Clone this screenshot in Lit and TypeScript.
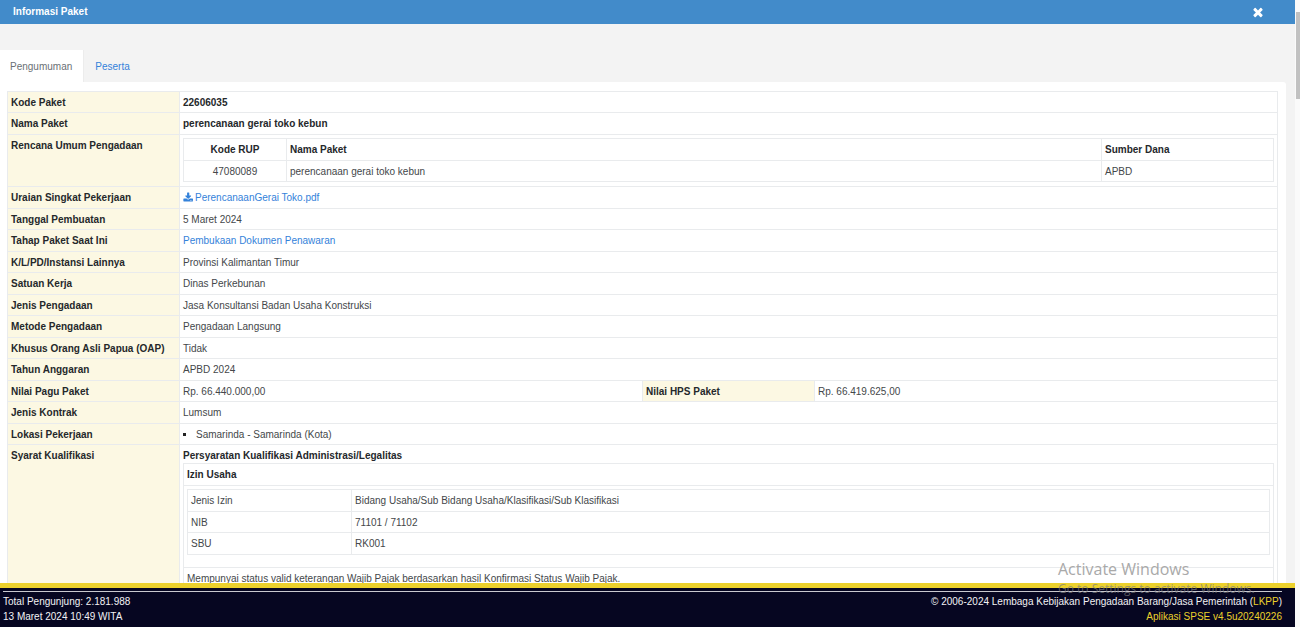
import { LitElement, html, css, nothing } from "lit";
import type { TemplateResult } from "lit";
import { customElement, state } from "lit/decorators.js";

const ICON_DOWNLOAD =
  "M1344 1344q0-26-19-45t-45-19-45 19-19 45 19 45 45 19 45-19 19-45zm256 0q0-26-19-45t-45-19-45 19-19 45 19 45 45 19 45-19 19-45zm128-224v320q0 40-28 68t-68 28h-1472q-40 0-68-28t-28-68v-320q0-40 28-68t68-28h465l135 136q58 56 136 56t136-56l136-136h464q40 0 68 28t28 68zm-325-569q17 41-14 70l-448 448q-18 19-45 19t-45-19l-448-448q-31-29-14-70 17-39 59-39h256v-448q0-26 19-45t45-19h256q26 0 45 19t19 45v448h256q42 0 59 39z";
const ICON_TIMES =
  "M1490 1322q0 40-28 68l-136 136q-28 28-68 28t-68-28l-294-294-294 294q-28 28-68 28t-68-28l-136-136q-28-28-28-68t28-68l294-294-294-294q-28-28-28-68t28-68l136-136q28-28 68-28t68 28l294 294 294-294q28-28 68-28t68 28l136 136q28 28 28 68t-28 68l-294 294 294 294q28 28 28 68z";

interface Row {
  label: string;
  value: string | TemplateResult;
  strong?: boolean;
  nested?: boolean;
  extra?: { label: string; value: string };
}

@customElement("app-root")
export class AppRoot extends LitElement {
  static styles = css`
    :host {
      display: grid;
      grid-template-columns: minmax(0, 1fr) 5px;
      height: 100vh;
      overflow: hidden;
      background: #f3f3f3;
      color: #44474a;
      font: 10px/16px "Liberation Sans", Arial, sans-serif;
    }
    a {
      color: #3482da;
      text-decoration: none;
    }
    .page {
      display: flex;
      flex-direction: column;
      min-height: 0;
      position: relative;
    }
    .titlebar {
      display: flex;
      justify-content: space-between;
      align-items: center;
      flex: none;
      height: 24px;
      padding: 0 30px 0 13px;
      background: #428bca;
      color: #fff;
    }
    .title {
      margin: 0;
      font-size: 10px;
      line-height: 16px;
      font-weight: bold;
    }
    .close {
      display: flex;
      padding: 0;
      border: 0;
      background: none;
      color: inherit;
      cursor: pointer;
    }
    .close svg {
      width: 14px;
      height: 14px;
      fill: currentColor;
    }
    .tabs {
      display: flex;
      flex: none;
      padding-top: 26px;
    }
    .tab {
      height: 32px;
      padding: 1px 11px 0;
      border: 0;
      background: none;
      color: #3482da;
      font: inherit;
      cursor: pointer;
    }
    .tab.active {
      padding-left: 10px;
      border-right: 1px solid #ececec;
      background: #fff;
      color: #6a7075;
    }
    .panel {
      flex: 1;
      min-height: 0;
      overflow: hidden;
      margin-right: 9px;
      padding: 9px 8px 0 7px;
      border-radius: 0 3px 0 0;
      background: #fff;
    }
    table {
      width: 100%;
      border-collapse: collapse;
      table-layout: fixed;
    }
    th,
    td {
      padding: 1px 3px 0;
      border: 1px solid #e9ebed;
      line-height: 19px;
      text-align: left;
      vertical-align: top;
      font-weight: normal;
    }
    .details > tbody > tr:nth-child(even) > *,
    .inner > tbody > tr:nth-child(odd) > * {
      line-height: 20px;
    }
    .label-col {
      width: 172px;
    }
    .label {
      background: #fcf8e3;
      white-space: nowrap;
    }
    .label,
    .strong,
    .head th {
      color: #25282b;
      font-weight: bold;
    }
    td.nested {
      padding-top: 3px;
      padding-bottom: 4px;
    }
    .code-col {
      width: 103px;
    }
    .fund-col {
      width: 172px;
    }
    .license-col {
      width: 164px;
    }
    .rup .code {
      text-align: center;
    }
    .heading {
      margin: 0;
      padding-top: 2px;
      line-height: 15px;
    }
    .group td.holder {
      padding-top: 3px;
      padding-bottom: 12px;
    }
    .file svg {
      width: 10px;
      height: 10px;
      margin-right: 2px;
      vertical-align: -1px;
      fill: currentColor;
    }
    .places {
      margin: 0;
      padding-left: 13px;
      list-style: square;
    }
    .places li::marker {
      color: #222;
    }
    .footer {
      flex: none;
      padding: 3px 13px 0 3px;
      border-top: 5px solid #ecd12c;
      background: #060621;
      color: #f2f2f4;
      line-height: 15px;
    }
    .footer-rows {
      display: flex;
      justify-content: space-between;
      border-top: 1px solid #c9c9cf;
      padding-top: 2px;
      padding-bottom: 3px;
    }
    .footer p {
      margin: 0;
    }
    .right {
      text-align: right;
    }
    .gold {
      color: #ecd12c;
    }
    .notice {
      position: absolute;
      right: 42px;
      bottom: 29px;
      width: 195px;
      color: #a9a9a9;
      font-family: "Open Sans", "Noto Sans", sans-serif;
      font-size: 12px;
      line-height: 18px;
      white-space: nowrap;
      pointer-events: none;
    }
    .notice p {
      margin: 0;
    }
    .notice-title {
      font-size: 16px;
      line-height: 22px;
    }
    .notice-text {
      color: rgba(125, 125, 125, 0.7);
    }
    .track {
      padding: 12px 0 0 1px;
      background: #fafafa;
    }
    .thumb {
      height: 87px;
      background: #c1c1c1;
    }
  `;

  @state() private tab = "Pengumuman";

  private rows: Row[] = [
    { label: "Kode Paket", value: "22606035", strong: true },
    { label: "Nama Paket", value: "perencanaan gerai toko kebun", strong: true },
    { label: "Rencana Umum Pengadaan", value: this.rupTable(), nested: true },
    {
      label: "Uraian Singkat Pekerjaan",
      value: html`<a class="file" href="#"
        ><svg viewBox="0 0 1728 1536" aria-hidden="true"><path d=${ICON_DOWNLOAD} /></svg
        >PerencanaanGerai Toko.pdf</a
      >`,
    },
    { label: "Tanggal Pembuatan", value: "5 Maret 2024" },
    { label: "Tahap Paket Saat Ini", value: html`<a href="#">Pembukaan Dokumen Penawaran</a>` },
    { label: "K/L/PD/Instansi Lainnya", value: "Provinsi Kalimantan Timur" },
    { label: "Satuan Kerja", value: "Dinas Perkebunan" },
    { label: "Jenis Pengadaan", value: "Jasa Konsultansi Badan Usaha Konstruksi" },
    { label: "Metode Pengadaan", value: "Pengadaan Langsung" },
    { label: "Khusus Orang Asli Papua (OAP)", value: "Tidak" },
    { label: "Tahun Anggaran", value: "APBD 2024" },
    {
      label: "Nilai Pagu Paket",
      value: "Rp. 66.440.000,00",
      extra: { label: "Nilai HPS Paket", value: "Rp. 66.419.625,00" },
    },
    { label: "Jenis Kontrak", value: "Lumsum" },
    {
      label: "Lokasi Pekerjaan",
      value: html`<ul class="places"><li>Samarinda - Samarinda (Kota)</li></ul>`,
    },
    { label: "Syarat Kualifikasi", value: this.requirements() },
  ];

  private rupTable() {
    return html`<table class="inner rup">
      <colgroup><col class="code-col" /><col /><col class="fund-col" /></colgroup>
      <tbody>
        <tr class="head"><th class="code" scope="col">Kode RUP</th><th scope="col">Nama Paket</th><th scope="col">Sumber Dana</th></tr>
        <tr><td class="code">47080089</td><td>perencanaan gerai toko kebun</td><td>APBD</td></tr>
      </tbody>
    </table>`;
  }

  private requirements() {
    const licenses = [
      ["Jenis Izin", "Bidang Usaha/Sub Bidang Usaha/Klasifikasi/Sub Klasifikasi"],
      ["NIB", "71101 / 71102"],
      ["SBU", "RK001"],
    ];
    return html`<p class="heading strong">Persyaratan Kualifikasi Administrasi/Legalitas</p>
      <table class="inner group">
        <tbody>
          <tr class="head"><th scope="col">Izin Usaha</th></tr>
          <tr>
            <td class="holder">
              <table class="inner">
                <colgroup><col class="license-col" /><col /></colgroup>
                <tbody>
                  ${licenses.map(([name, text]) => html`<tr><td>${name}</td><td>${text}</td></tr>`)}
                </tbody>
              </table>
            </td>
          </tr>
          <tr><td>Mempunyai status valid keterangan Wajib Pajak berdasarkan hasil Konfirmasi Status Wajib Pajak.</td></tr>
        </tbody>
      </table>`;
  }

  private renderRow(row: Row) {
    return html`<tr>
      <th class="label" scope="row">${row.label}</th>
      <td class="${row.strong ? "strong" : ""} ${row.nested ? "nested" : ""}" colspan=${row.extra ? 1 : 3}>${row.value}</td>
      ${row.extra
        ? html`<th class="label" scope="row">${row.extra.label}</th><td>${row.extra.value}</td>`
        : nothing}
    </tr>`;
  }

  render() {
    return html`
      <div class="page">
        <header class="titlebar">
          <h1 class="title">Informasi Paket</h1>
          <button class="close" aria-label="Tutup">
            <svg viewBox="0 0 1792 1792" aria-hidden="true"><path d=${ICON_TIMES} /></svg>
          </button>
        </header>
        <nav class="tabs" role="tablist">
          ${["Pengumuman", "Peserta"].map(
            (name) => html`<button
              class="tab ${this.tab === name ? "active" : ""}"
              role="tab"
              aria-selected=${this.tab === name}
              @click=${() => (this.tab = name)}
            >${name}</button>`,
          )}
        </nav>
        <main class="panel">
          <table class="details">
            <colgroup><col class="label-col" /><col /><col class="label-col" /><col /></colgroup>
            <tbody>${this.rows.map((row) => this.renderRow(row))}</tbody>
          </table>
        </main>
        <footer class="footer">
          <div class="footer-rows">
            <div>
              <p>Total Pengunjung: 2.181.988</p>
              <p>13 Maret 2024 10:49 WITA</p>
            </div>
            <div class="right">
              <p>© 2006-2024 Lembaga Kebijakan Pengadaan Barang/Jasa Pemerintah (<a class="gold" href="#">LKPP</a>)</p>
              <p class="gold">Aplikasi SPSE v4.5u20240226</p>
            </div>
          </div>
        </footer>
        <div class="notice">
          <p class="notice-title">Activate Windows</p>
          <p class="notice-text">Go to Settings to activate Windows.</p>
        </div>
      </div>
      <div class="track"><div class="thumb"></div></div>
    `;
  }
}
